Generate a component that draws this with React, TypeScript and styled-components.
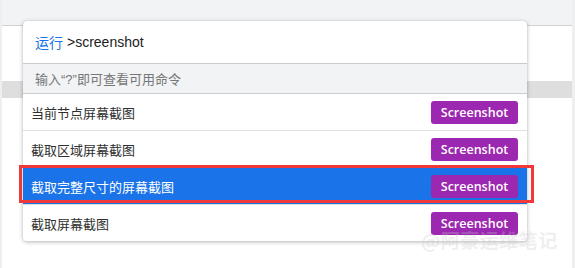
import React from "react";
import styled, { createGlobalStyle } from "styled-components";

const Global = createGlobalStyle`
  html, body { margin: 0; padding: 0; background: #fff; }
  body { font-family: "Liberation Sans", "Noto Sans CJK SC", sans-serif; }
`;

const Frame = styled.div`
  position: relative;
  width: 575px;
  height: 268px;
  box-sizing: border-box;
  border-left: 2px solid #eeeff1;
  border-right: 3px solid #eeeff1;
  background: #fff;
  display: flex;
  flex-direction: column;
  overflow: hidden;
`;

const TopBar = styled.div`
  height: 25px;
  background: #f1f3f4;
  border-bottom: 1px solid #d0d2d4;
  flex: none;
`;

const Spacer = styled.div<{ $h: number }>`
  height: ${(p) => p.$h}px;
  flex: none;
`;

const Band = styled.div`
  height: 17px;
  background: #dedede;
  flex: none;
`;

const Palette = styled.div`
  position: absolute;
  left: 21px;
  top: 21px;
  width: 504px;
  background: #fff;
  border-radius: 4px;
  box-shadow: 0 1px 4px rgba(0, 0, 0, 0.28), 0 0 1px rgba(0, 0, 0, 0.2);
  display: flex;
  flex-direction: column;
  overflow: hidden;
`;

const InputRow = styled.div`
  height: 42px;
  display: flex;
  align-items: center;
  padding-left: 12px;
  border-bottom: 1px solid #c9cbcd;
  font-size: 14px;
  color: #202124;
  gap: 4px;
`;

const Prefix = styled.span`
  color: #1a73e8;
  font-family: "Noto Sans CJK SC", sans-serif;
  font-size: 14px;
`;

const Hint = styled.div`
  height: 29px;
  display: flex;
  align-items: center;
  padding-left: 12px;
  background: #f1f3f4;
  border-bottom: 1px solid #c9cbcd;
  color: #777;
  font-size: 13px;
  font-family: "Liberation Sans", "Noto Sans CJK SC", sans-serif;
`;

const Row = styled.div<{ $selected?: boolean; $last?: boolean }>`
  height: 36px;
  display: flex;
  align-items: center;
  justify-content: space-between;
  padding: 0 9px 0 8px;
  background: ${(p) => (p.$selected ? "#1a73e8" : "#fff")};
  color: ${(p) => (p.$selected ? "#fff" : "#303030")};
  border-bottom: ${(p) => (p.$last ? "none" : "1px solid #e0e0e0")};
  font-size: 13px;
  font-family: "Noto Sans CJK SC", sans-serif;
`;

const Btn = styled.span`
  display: inline-flex;
  align-items: center;
  justify-content: center;
  width: 87px;
  height: 23px;
  border-radius: 3px;
  background: #9c27b0;
  color: #fff;
  font-family: "Open Sans", sans-serif;
  font-weight: 600;
  font-size: 12.5px;
`;

const Highlight = styled.div`
  position: absolute;
  left: 17px;
  top: 165px;
  width: 515px;
  height: 38px;
  box-sizing: border-box;
  border: 3px solid #f03a3a;
  pointer-events: none;
`;

const Watermark = styled.div`
  position: absolute;
  left: 419px;
  top: 229px;
  font-family: "Noto Sans CJK SC", sans-serif;
  font-weight: 700;
  font-size: 19px;
  line-height: 22px;
  color: rgba(200, 200, 200, 0.3);
  letter-spacing: 0.5px;
  pointer-events: none;
`;

const items = [
  "当前节点屏幕截图",
  "截取区域屏幕截图",
  "截取完整尺寸的屏幕截图",
  "截取屏幕截图",
];

export default function App() {
  return (
    <>
      <Global />
      <Frame>
        <TopBar />
        <Spacer $h={55} />
        <Band />
        <Palette>
          <InputRow>
            <Prefix>运行</Prefix>
            <span>&gt;screenshot</span>
          </InputRow>
          <Hint>输入“?”即可查看可用命令</Hint>
          {items.map((t, i) => (
            <Row key={t} $selected={i === 2} $last={i === items.length - 1}>
              <span>{t}</span>
              <Btn>Screenshot</Btn>
            </Row>
          ))}
        </Palette>
        <Highlight />
        <Watermark>@阿豪运维笔记</Watermark>
      </Frame>
    </>
  );
}
